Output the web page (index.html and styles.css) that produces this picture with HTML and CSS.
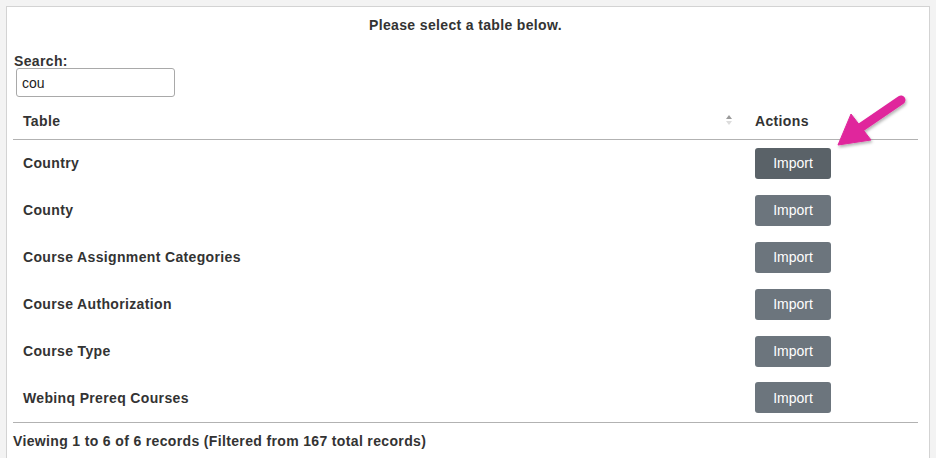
FILE: index.html
```html
<!DOCTYPE html>
<html>
<head>
<meta charset="utf-8">
<link rel="stylesheet" href="styles.css">
</head>
<body>
<div class="panel">
  <h3 class="title">Please select a table below.</h3>
  <div class="search">
    <label class="search-label" for="q">Search:</label>
    <input id="q" class="search-input" type="text" value="cou">
  </div>
  <table class="grid">
    <thead>
      <tr>
        <th class="col-name"><span>Table</span><span class="sort"><i class="up"></i><i class="down"></i></span></th>
        <th class="col-actions">Actions</th>
      </tr>
    </thead>
    <tbody>
      <tr><td class="name">Country</td><td><button class="btn btn-hover">Import</button></td></tr>
      <tr><td class="name">County</td><td><button class="btn">Import</button></td></tr>
      <tr><td class="name">Course Assignment Categories</td><td><button class="btn">Import</button></td></tr>
      <tr><td class="name">Course Authorization</td><td><button class="btn">Import</button></td></tr>
      <tr><td class="name">Course Type</td><td><button class="btn">Import</button></td></tr>
      <tr><td class="name">Webinq Prereq Courses</td><td><button class="btn">Import</button></td></tr>
    </tbody>
  </table>
  <div class="footer">Viewing 1 to 6 of 6 records (Filtered from 167 total records)</div>
  <svg class="arrow" width="90" height="70" viewBox="830 85 90 70">
    <defs>
      <filter id="sh" x="-20%" y="-20%" width="150%" height="150%">
        <feDropShadow dx="1" dy="2" stdDeviation="1.5" flood-color="#000" flood-opacity="0.3"/>
      </filter>
    </defs>
    <g filter="url(#sh)" fill="#e0289c" stroke="#e0289c">
      <line x1="901" y1="99" x2="860" y2="127" stroke-width="9" stroke-linecap="round"/>
      <polygon points="838,144 851,113 871,139" stroke-width="1" stroke-linejoin="round"/>
    </g>
  </svg>
</div>
</body>
</html>
```

FILE: styles.css
```css
html, body {
  margin: 0;
  padding: 0;
  background: #f3f3f3;
  font-family: "Liberation Sans", Arial, sans-serif;
  color: #333;
}
body {
  padding: 6px 0 0 6px;
  height: 458px;
  box-sizing: border-box;
  overflow: hidden;
}
.panel {
  position: relative;
  width: 924px;
  height: 460px;
  background: #fff;
  border: 1px solid #d3d3d3;
  border-bottom: none;
  padding: 0 11px 0 6px;
  box-sizing: border-box;
}
.title {
  margin: 0;
  padding-top: 10px;
  text-align: center;
  font-size: 14px;
  letter-spacing: 0.35px;
  font-weight: bold;
  line-height: 17px;
}
.search {
  margin-top: 20px;
  padding-left: 1px;
  display: flex;
  flex-direction: column;
  align-items: flex-start;
}
.search-label {
  font-size: 14px;
  letter-spacing: 0.35px;
  font-weight: bold;
  line-height: 14px;
}
.search-input {
  margin: 0 0 0 2px;
  width: 159px;
  height: 29px;
  box-sizing: border-box;
  border: 1px solid #a9a9a9;
  border-radius: 3px;
  padding: 0 5px;
  font-family: "Liberation Sans", Arial, sans-serif;
  font-size: 14px;
  color: #222;
}
.grid {
  width: 100%;
  border-collapse: collapse;
  margin-top: 1px;
}
.grid th {
  text-align: left;
  font-size: 14px;
  letter-spacing: 0.35px;
  font-weight: bold;
  height: 41px;
  box-sizing: border-box;
  padding: 6px 10px 0 10px;
  border-bottom: 1px solid #b2b2b2;
  vertical-align: middle;
}
.col-name {
  position: relative;
}
.grid th.col-actions {
  width: 173px;
  box-sizing: border-box;
}
.sort {
  position: absolute;
  right: 13px;
  top: 17px;
  display: flex;
  flex-direction: column;
  gap: 2px;
}
.sort i {
  display: block;
  width: 0;
  height: 0;
  border-left: 3px solid transparent;
  border-right: 3px solid transparent;
}
.sort .up {
  border-bottom: 4px solid #9a9a9a;
}
.sort .down {
  border-top: 4px solid #dcdcdc;
}
.grid td {
  height: 47px;
  padding: 1px 10px 0 10px;
  box-sizing: border-box;
  vertical-align: middle;
}
.grid tbody tr:last-child td {
  height: 48px;
  padding-bottom: 1px;
  border-bottom: 1px solid #b2b2b2;
}
.name {
  font-size: 14px;
  letter-spacing: 0.35px;
  font-weight: bold;
}
.btn {
  width: 76px;
  height: 31px;
  border: none;
  border-radius: 3px;
  background: #6c757d;
  color: #fff;
  font-family: "Liberation Sans", Arial, sans-serif;
  font-size: 14px;
  padding: 0;
  display: block;
}
.btn-hover {
  background: #5a6268;
}
.footer {
  font-size: 14px;
  letter-spacing: 0.35px;
  font-weight: bold;
  margin-top: 10px;
  line-height: 16px;
}
.arrow {
  position: absolute;
  left: 823px;
  top: 79px;
  overflow: visible;
}
```
